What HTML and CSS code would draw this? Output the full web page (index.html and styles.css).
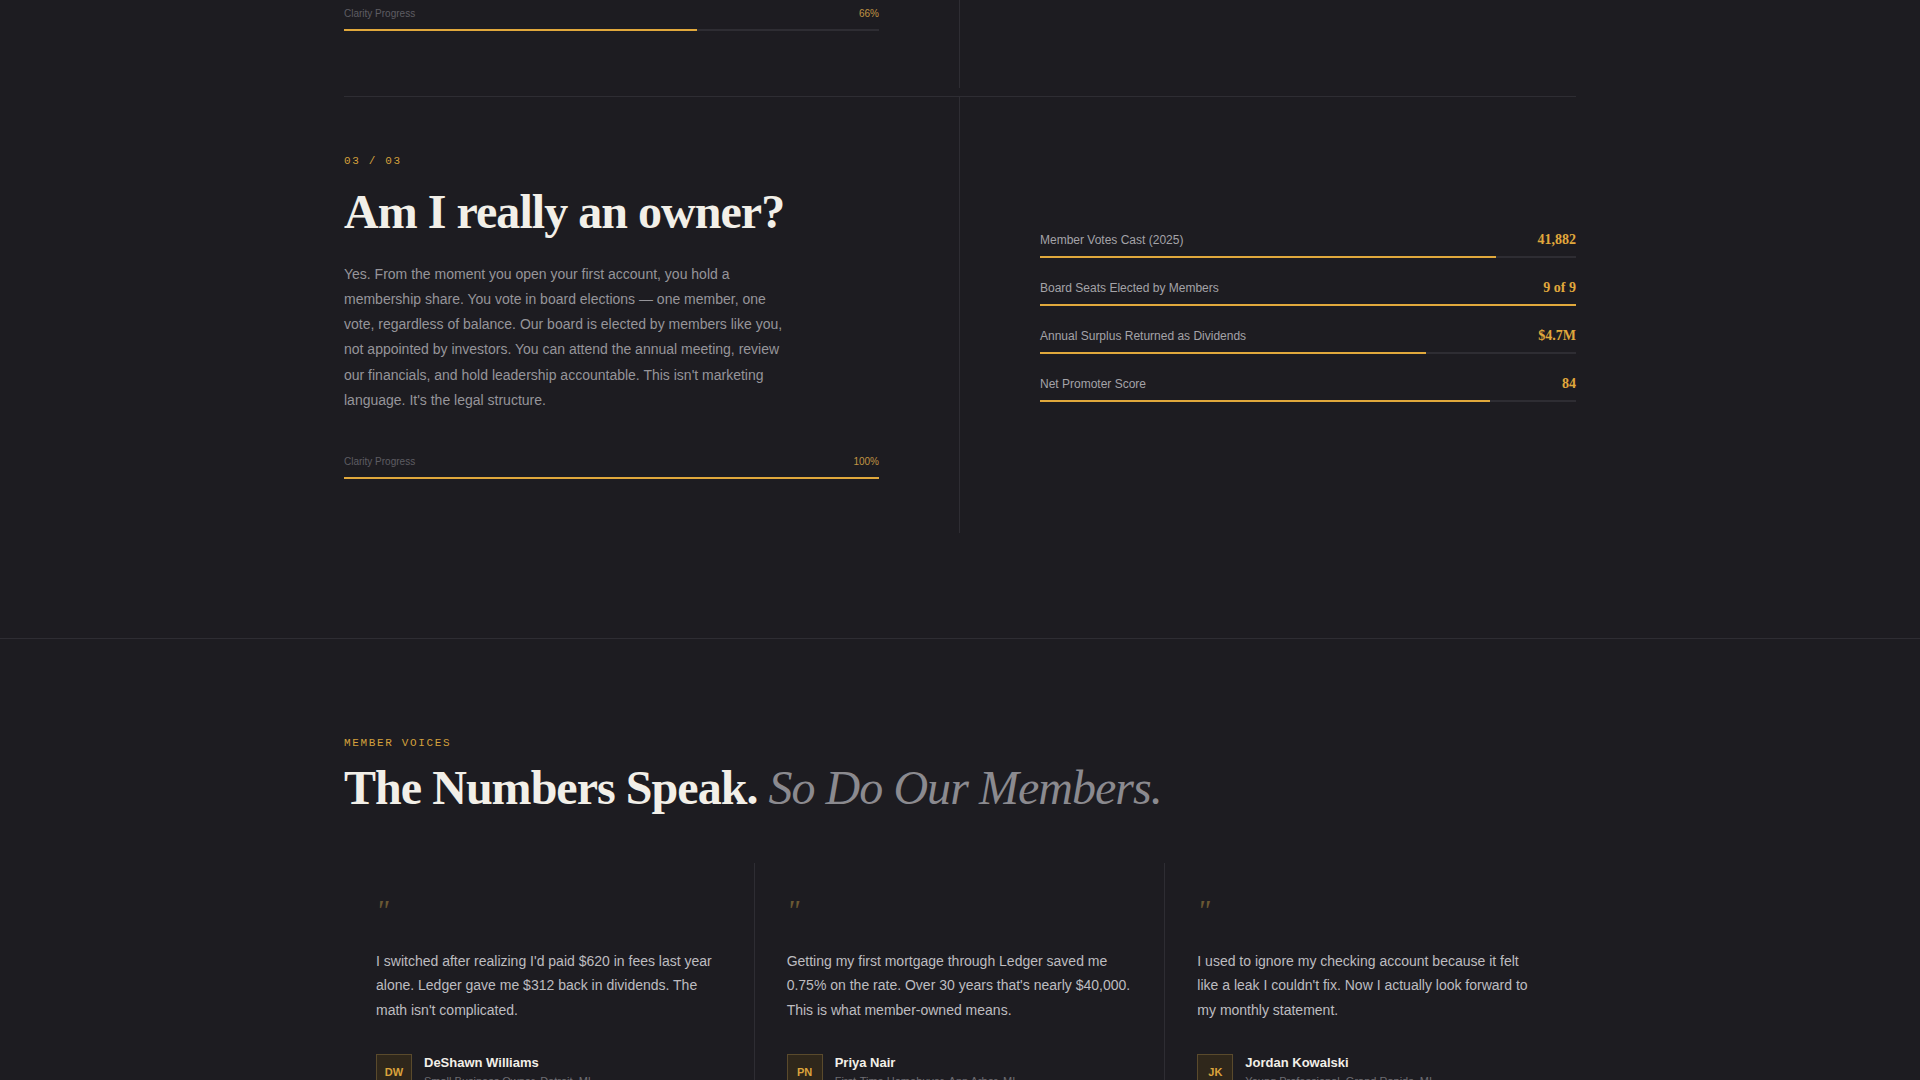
FILE: index.html
```html
<!DOCTYPE html>
<html lang="en">
<head>
  <meta charset="UTF-8">
  <meta name="viewport" content="width=device-width, initial-scale=1.0">
  <title>Ledger — Member Owned Banking</title>
  <link rel="stylesheet" href="styles.css">
</head>
<body>

  <section class="faq">
    <div class="wrap">

      <!-- end of step 02 -->
      <article class="step step-tail">
        <div class="step-text">
          <div class="clarity">
            <div class="clarity-head">
              <span>Clarity Progress</span>
              <span class="clarity-pct">66%</span>
            </div>
            <div class="bar"><div class="bar-fill" style="width: 66%"></div></div>
          </div>
        </div>
        <div class="step-aside"></div>
      </article>

      <article class="step">
        <div class="step-text">
          <div class="eyebrow">03 / 03</div>
          <h2 class="step-title">Am I really an owner?</h2>
          <p class="step-body">Yes. From the moment you open your first account, you hold a membership share. You vote in board elections — one member, one vote, regardless of balance. Our board is elected by members like you, not appointed by investors. You can attend the annual meeting, review our financials, and hold leadership accountable. This isn't marketing language. It's the legal structure.</p>
          <div class="clarity">
            <div class="clarity-head">
              <span>Clarity Progress</span>
              <span class="clarity-pct">100%</span>
            </div>
            <div class="bar"><div class="bar-fill" style="width: 100%"></div></div>
          </div>
        </div>

        <div class="step-aside">
          <div class="metrics">
            <div class="metric">
              <div class="metric-head">
                <span class="metric-label">Member Votes Cast (2025)</span>
                <span class="metric-value">41,882</span>
              </div>
              <div class="bar"><div class="bar-fill" style="width: 85%"></div></div>
            </div>
            <div class="metric">
              <div class="metric-head">
                <span class="metric-label">Board Seats Elected by Members</span>
                <span class="metric-value">9 of 9</span>
              </div>
              <div class="bar"><div class="bar-fill" style="width: 100%"></div></div>
            </div>
            <div class="metric">
              <div class="metric-head">
                <span class="metric-label">Annual Surplus Returned as Dividends</span>
                <span class="metric-value">$4.7M</span>
              </div>
              <div class="bar"><div class="bar-fill" style="width: 72%"></div></div>
            </div>
            <div class="metric">
              <div class="metric-head">
                <span class="metric-label">Net Promoter Score</span>
                <span class="metric-value">84</span>
              </div>
              <div class="bar"><div class="bar-fill" style="width: 84%"></div></div>
            </div>
          </div>
        </div>
      </article>

    </div>
  </section>

  <section class="voices">
    <div class="wrap">
      <div class="eyebrow">Member Voices</div>
      <h2 class="voices-title">The Numbers Speak. <em>So Do Our Members.</em></h2>

      <div class="quotes">
        <figure class="quote">
          <div class="quote-mark">"</div>
          <blockquote>I switched after realizing I'd paid $620 in fees last year alone. Ledger gave me $312 back in dividends. The math isn't complicated.</blockquote>
          <figcaption class="author">
            <div class="avatar">DW</div>
            <div>
              <div class="author-name">DeShawn Williams</div>
              <div class="author-role">Small Business Owner, Detroit, MI</div>
            </div>
          </figcaption>
        </figure>

        <figure class="quote">
          <div class="quote-mark">"</div>
          <blockquote>Getting my first mortgage through Ledger saved me 0.75% on the rate. Over 30 years that's nearly $40,000. This is what member-owned means.</blockquote>
          <figcaption class="author">
            <div class="avatar">PN</div>
            <div>
              <div class="author-name">Priya Nair</div>
              <div class="author-role">First-Time Homebuyer, Ann Arbor, MI</div>
            </div>
          </figcaption>
        </figure>

        <figure class="quote">
          <div class="quote-mark">"</div>
          <blockquote>I used to ignore my checking account because it felt like a leak I couldn't fix. Now I actually look forward to my monthly statement.</blockquote>
          <figcaption class="author">
            <div class="avatar">JK</div>
            <div>
              <div class="author-name">Jordan Kowalski</div>
              <div class="author-role">Young Professional, Grand Rapids, MI</div>
            </div>
          </figcaption>
        </figure>
      </div>
    </div>
  </section>

</body>
</html>
```

FILE: styles.css
```css
body {
  margin: 0;
  background-color: #1d1c21;
  color: #f2efe8;
  font-family: 'Liberation Sans', Arial, sans-serif;
}

.wrap {
  max-width: 1232px;
  margin: 0 auto;
}

.eyebrow {
  font-family: 'Liberation Mono', monospace;
  font-size: 11px;
  line-height: 16px;
  letter-spacing: 0.15em;
  text-transform: uppercase;
  color: #d4a03c;
}

/* progress bars (clarity + metrics) */
.bar {
  height: 2px;
  background-color: #2e2d33;
}

.bar-fill {
  height: 100%;
  background-color: #e0a83c;
}

/* ---- faq steps ---- */
.faq {
  padding-bottom: 105px;
}

.step {
  display: grid;
  grid-template-columns: 1fr 1fr;
  border-top: 1px solid #2e2d33;
  margin-top: 8px;
}

.step-tail {
  border-top: none;
  margin-top: 0;
}

.step-text {
  padding: 56px 80px 54px 0;
  border-right: 1px solid #2e2d33;
}

.step-tail .step-text {
  padding-top: 6px;
  padding-bottom: 57px;
}

.step-title {
  font-family: 'Liberation Serif', 'Times New Roman', serif;
  font-size: 48px;
  font-weight: bold;
  line-height: 1.1;
  letter-spacing: -0.02em;
  margin: 17px 0 23px;
  color: #f2efe8;
}

.step-body {
  max-width: 450px;
  margin: 0;
  font-size: 14px;
  line-height: 25.2px;
  color: #96959a;
}

.clarity {
  margin-top: 41px;
}

.step-tail .clarity {
  margin-top: 0;
}

.clarity-head {
  display: flex;
  justify-content: space-between;
  font-size: 10px;
  line-height: 16px;
  color: #5e5d63;
  margin-bottom: 7px;
}

.clarity-pct {
  color: #c09443;
}

.step-aside {
  padding-left: 80px;
  display: flex;
  flex-direction: column;
  justify-content: center;
}

.metrics {
  padding-top: 2px;
}

.metric {
  margin-bottom: 20px;
}

.metric:last-child {
  margin-bottom: 0;
}

.metric-head {
  display: flex;
  justify-content: space-between;
  align-items: baseline;
  line-height: 20px;
  margin-bottom: 6px;
}

.metric-label {
  font-size: 12px;
  color: #a4a3a8;
}

.metric-value {
  font-family: 'Liberation Serif', 'Times New Roman', serif;
  font-size: 14px;
  font-weight: bold;
  color: #e0a83c;
}

/* ---- member voices ---- */
.voices {
  border-top: 1px solid #2e2d33;
  padding-top: 96px;
}

.voices-title {
  font-family: 'Liberation Serif', 'Times New Roman', serif;
  font-size: 48px;
  font-weight: bold;
  line-height: 1.1;
  letter-spacing: -0.02em;
  margin: 11px 0 48px;
  color: #f2efe8;
}

.voices-title em {
  font-weight: normal;
  color: #8b8a8f;
}

.quotes {
  display: grid;
  grid-template-columns: repeat(3, 1fr);
}

.quote {
  margin: 0;
  padding: 32px 34px 40px 32px;
  border-right: 1px solid #2e2d33;
}

.quote:last-child {
  border-right: none;
}

.quote-mark {
  font-family: 'Liberation Serif', serif;
  font-style: italic;
  font-size: 30px;
  line-height: 30px;
  color: #6a5833;
  margin-bottom: 24px;
}

.quote blockquote {
  margin: 0 0 32px;
  font-size: 14px;
  line-height: 24.5px;
  color: #bdbcc0;
}

.author {
  display: flex;
  gap: 12px;
}

.avatar {
  width: 34px;
  height: 34px;
  flex-shrink: 0;
  border: 1px solid #5a4a2c;
  background-color: #2f271b;
  color: #dba33c;
  font-size: 11px;
  font-weight: bold;
  display: flex;
  align-items: center;
  justify-content: center;
}

.author-name {
  font-size: 13px;
  font-weight: bold;
  line-height: 18px;
  color: #f2efe8;
}

.author-role {
  font-size: 11px;
  line-height: 18px;
  color: #6d6c72;
}
```
